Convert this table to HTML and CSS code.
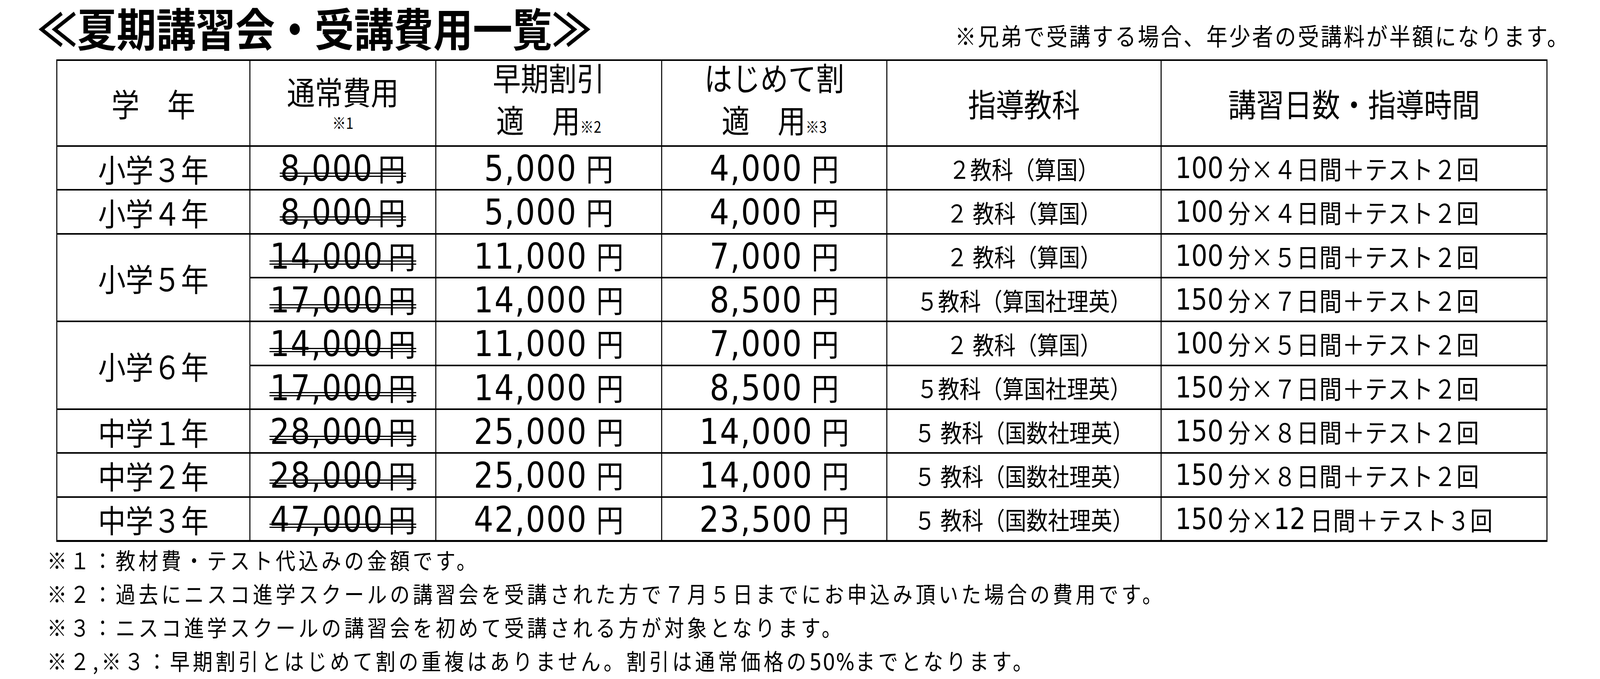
FILE: index.html
```html
<!DOCTYPE html>
<html lang="ja">
<head>
<meta charset="utf-8">
<title>夏期講習会・受講費用一覧</title>
<link rel="stylesheet" href="styles.css">
</head>
<body>
<div class="fit">
<div class="page">
  <header class="head">
    <h1 class="title">≪夏期講習会・受講費用一覧≫</h1>
    <p class="note">※兄弟で受講する場合、年少者の受講料が半額になります。</p>
  </header>

  <div class="grid">
    <div class="c h">学　年</div>
    <div class="c h h2 fee"><span class="l1">通常費用</span><span class="l2 sm">※1</span></div>
    <div class="c h h2"><span class="l1">早期割引</span><span class="l1">適　用<span class="sm">※2</span></span></div>
    <div class="c h h2"><span class="l1">はじめて割</span><span class="l1">適　用<span class="sm">※3</span></span></div>
    <div class="c h">指導教科</div>
    <div class="c h">講習日数・指導時間</div>

    <div class="c g">小学３年</div>
    <div class="c"><span class="amt s">8,000<span class="y">円</span></span></div>
    <div class="c"><span class="amt">5,000<span class="y">円</span></span></div>
    <div class="c"><span class="amt">4,000<span class="y">円</span></span></div>
    <div class="c k">２教科（算国）</div>
    <div class="c d"><span class="n">100</span>分×４日間＋テスト２回</div>

    <div class="c g">小学４年</div>
    <div class="c"><span class="amt s">8,000<span class="y">円</span></span></div>
    <div class="c"><span class="amt">5,000<span class="y">円</span></span></div>
    <div class="c"><span class="amt">4,000<span class="y">円</span></span></div>
    <div class="c k">２ 教科（算国）</div>
    <div class="c d"><span class="n">100</span>分×４日間＋テスト２回</div>

    <div class="c g span2">小学５年</div>
    <div class="c"><span class="amt s">14,000<span class="y">円</span></span></div>
    <div class="c"><span class="amt">11,000<span class="y">円</span></span></div>
    <div class="c"><span class="amt">7,000<span class="y">円</span></span></div>
    <div class="c k">２ 教科（算国）</div>
    <div class="c d"><span class="n">100</span>分×５日間＋テスト２回</div>

    <div class="c"><span class="amt s">17,000<span class="y">円</span></span></div>
    <div class="c"><span class="amt">14,000<span class="y">円</span></span></div>
    <div class="c"><span class="amt">8,500<span class="y">円</span></span></div>
    <div class="c k">５教科（算国社理英）</div>
    <div class="c d"><span class="n">150</span>分×７日間＋テスト２回</div>

    <div class="c g span2">小学６年</div>
    <div class="c"><span class="amt s">14,000<span class="y">円</span></span></div>
    <div class="c"><span class="amt">11,000<span class="y">円</span></span></div>
    <div class="c"><span class="amt">7,000<span class="y">円</span></span></div>
    <div class="c k">２ 教科（算国）</div>
    <div class="c d"><span class="n">100</span>分×５日間＋テスト２回</div>

    <div class="c"><span class="amt s">17,000<span class="y">円</span></span></div>
    <div class="c"><span class="amt">14,000<span class="y">円</span></span></div>
    <div class="c"><span class="amt">8,500<span class="y">円</span></span></div>
    <div class="c k">５教科（算国社理英）</div>
    <div class="c d"><span class="n">150</span>分×７日間＋テスト２回</div>

    <div class="c g">中学１年</div>
    <div class="c"><span class="amt s">28,000<span class="y">円</span></span></div>
    <div class="c"><span class="amt">25,000<span class="y">円</span></span></div>
    <div class="c"><span class="amt">14,000<span class="y">円</span></span></div>
    <div class="c k">５ 教科（国数社理英）</div>
    <div class="c d"><span class="n">150</span>分×８日間＋テスト２回</div>

    <div class="c g">中学２年</div>
    <div class="c"><span class="amt s">28,000<span class="y">円</span></span></div>
    <div class="c"><span class="amt">25,000<span class="y">円</span></span></div>
    <div class="c"><span class="amt">14,000<span class="y">円</span></span></div>
    <div class="c k">５ 教科（国数社理英）</div>
    <div class="c d"><span class="n">150</span>分×８日間＋テスト２回</div>

    <div class="c g">中学３年</div>
    <div class="c"><span class="amt s">47,000<span class="y">円</span></span></div>
    <div class="c"><span class="amt">42,000<span class="y">円</span></span></div>
    <div class="c"><span class="amt">23,500<span class="y">円</span></span></div>
    <div class="c k">５ 教科（国数社理英）</div>
    <div class="c d"><span class="n">150</span>分×<span class="n">12</span>日間＋テスト３回</div>
  </div>

  <div class="notes">
    <p>※１：教材費・テスト代込みの金額です。</p>
    <p>※２：過去にニスコ進学スクールの講習会を受講された方で７月５日までにお申込み頂いた場合の費用です。</p>
    <p>※３：ニスコ進学スクールの講習会を初めて受講される方が対象となります。</p>
    <p>※２,※３：早期割引とはじめて割の重複はありません。割引は通常価格の<span class="pct">50%</span>までとなります。</p>
  </div>
</div>
</div>
<script src="fit.js"></script>
</body>
</html>
```

FILE: fit.js
```js
(function () {
  function fit() {
    var sx = Math.min(1, window.innerWidth / 4690);
    document.documentElement.style.setProperty('--sx', String(sx));
  }
  fit();
  window.addEventListener('resize', fit);
})();
```

FILE: styles.css
```css
html, body {
  margin: 0;
  padding: 0;
  background: #fff;
  color: #000;
}

body {
  font-family: "Noto Sans CJK JP", "Noto Sans", sans-serif;
  overflow: hidden;
}

.fit {
  width: 100%;
  overflow: hidden;
}

.page {
  width: 4690px;
  padding-top: 10px;
  transform-origin: 0 0;
  transform: scaleX(var(--sx, 1));
}

.head {
  display: flex;
  justify-content: space-between;
  height: 142px;
  padding: 0 88px 0 110px;
}

.title {
  margin: 9px 0 0;
  align-self: flex-start;
  font-family: "Liberation Sans", "Noto Sans CJK JP", sans-serif;
  font-size: 116px;
  font-weight: 700;
  letter-spacing: 0;
  line-height: 120px;
  white-space: nowrap;
}

.note {
  margin: 0;
  align-self: flex-end;
  font-size: 62px;
  letter-spacing: 5px;
  line-height: 124px;
  white-space: nowrap;
}

.grid {
  display: grid;
  grid-template-columns: 563px 542px 659px 657px 801px 1128px;
  grid-template-rows: 216px repeat(9, 108.33px);
  gap: 4px 3px;
  padding: 4px 3px 5px 3px;
  margin-left: 165px;
  width: max-content;
  background: #000;
}

.c {
  background: #fff;
  display: flex;
  align-items: center;
  justify-content: center;
  white-space: nowrap;
}

.span2 {
  grid-row: span 2;
}

.h {
  font-size: 82px;
  line-height: 108px;
}

.h2 {
  flex-direction: column;
  padding-bottom: 8px;
}

.h2.fee {
  padding-bottom: 10px;
}

.l1 {
  display: block;
  line-height: 108px;
}

.l2 {
  display: block;
  line-height: 52px;
}

.sm {
  font-size: 40px;
}

.g {
  font-size: 81px;
  line-height: 1;
}

.amt {
  display: inline-block;
  font-family: "DejaVu Sans", "Noto Sans CJK JP", sans-serif;
  font-size: 90px;
  letter-spacing: 3px;
  line-height: 90px;
  padding: 0 2px;
}

.amt .y {
  font-family: "Noto Sans CJK JP", sans-serif;
  font-size: 80px;
  letter-spacing: 0;
  margin-left: 26px;
}

.amt.s .y {
  margin-left: 14px;
}

.amt.s {
  background-image: linear-gradient(#000, #000), linear-gradient(#000, #000);
  background-repeat: no-repeat;
  background-size: 100% 3px, 100% 3px;
  background-position: 0 59px, 0 67px;
}

.k {
  font-size: 63px;
  line-height: 1;
}

.d {
  justify-content: flex-start;
  padding-left: 40px;
  font-size: 66px;
  line-height: 1;
  letter-spacing: 1px;
}

.n {
  font-family: "DejaVu Sans", sans-serif;
  font-size: 74px;
  letter-spacing: 0;
  margin-right: 13px;
}

.notes {
  margin-top: 2px;
  padding-left: 138px;
  font-size: 58px;
  letter-spacing: 9px;
  line-height: 86px;
}

.notes p {
  margin: 0;
  white-space: nowrap;
}

.pct {
  font-family: "DejaVu Sans", sans-serif;
  letter-spacing: 2px;
}
```
